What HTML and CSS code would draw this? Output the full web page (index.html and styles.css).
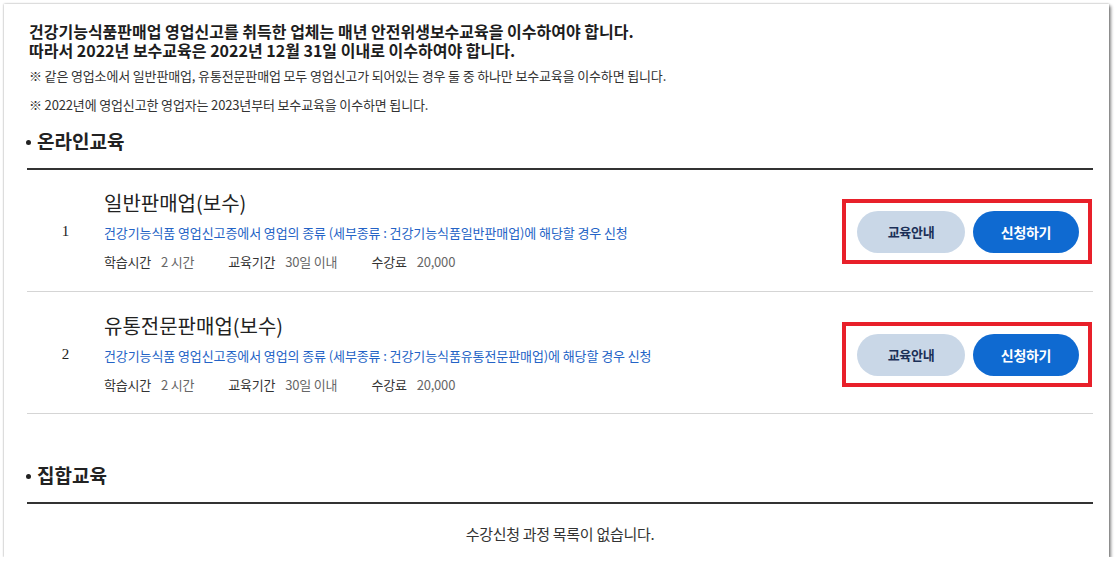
FILE: index.html
```html
<!DOCTYPE html>
<html>
<head>
    <title>보수교육 신청</title>
    <link rel="stylesheet" href="styles.css">
</head>
<body>
    <div class="panel">
        <div class="intro">
            <p class="intro-title">건강기능식품판매업 영업신고를 취득한 업체는 매년 안전위생보수교육을 이수하여야 합니다.</p>
            <p class="intro-title">따라서 2022년 보수교육은 2022년 12월 31일 이내로 이수하여야 합니다.</p>
            <p class="note">※ 같은 영업소에서 일반판매업, 유통전문판매업 모두 영업신고가 되어있는 경우 둘 중 하나만 보수교육을 이수하면 됩니다.</p>
            <p class="note note-second">※ 2022년에 영업신고한 영업자는 2023년부터 보수교육을 이수하면 됩니다.</p>
        </div>

        <h2 class="sec-title">온라인교육</h2>
        <ul class="course-list">
            <li class="course">
                <span class="course-no">1</span>
                <div class="course-info">
                    <h3 class="course-name">일반판매업(보수)</h3>
                    <p class="course-desc">건강기능식품 영업신고증에서 영업의 종류 (세부종류 : 건강기능식품일반판매업)에 해당할 경우 신청</p>
                    <div class="course-meta">
                        <span><em>학습시간</em>2 시간</span>
                        <span><em>교육기간</em>30일 이내</span>
                        <span><em>수강료</em>20,000</span>
                    </div>
                </div>
                <div class="course-btns">
                    <button class="btn btn-guide">교육안내</button>
                    <button class="btn btn-apply">신청하기</button>
                </div>
            </li>
            <li class="course">
                <span class="course-no">2</span>
                <div class="course-info">
                    <h3 class="course-name">유통전문판매업(보수)</h3>
                    <p class="course-desc">건강기능식품 영업신고증에서 영업의 종류 (세부종류 : 건강기능식품유통전문판매업)에 해당할 경우 신청</p>
                    <div class="course-meta">
                        <span><em>학습시간</em>2 시간</span>
                        <span><em>교육기간</em>30일 이내</span>
                        <span><em>수강료</em>20,000</span>
                    </div>
                </div>
                <div class="course-btns">
                    <button class="btn btn-guide">교육안내</button>
                    <button class="btn btn-apply">신청하기</button>
                </div>
            </li>
        </ul>

        <h2 class="sec-title sec-offline">집합교육</h2>
        <p class="empty">수강신청 과정 목록이 없습니다.</p>
    </div>
</body>
</html>
```

FILE: styles.css
```css
body {
    margin: 0;
    padding: 4px 0 0 4px;
    background-color: #fff;
    font-family: "Noto Sans CJK KR", "Noto Sans", sans-serif;
    color: #222;
}

.panel {
    box-sizing: border-box;
    width: 1105px;
    height: 553px;
    padding: 18px 16px 0 23px;
    background-color: #fff;
    box-shadow: 2px 2px 3px rgba(0, 0, 0, 0.45), 0 0 2px rgba(0, 0, 0, 0.35);
    overflow: hidden;
}

p, h2, h3, ul {
    margin: 0;
    padding: 0;
}

.intro {
    padding-left: 2px;
}

.intro-title {
    font-size: 16px;
    line-height: 19px;
    font-weight: bold;
    color: #1d1d1d;
}

.note {
    margin-top: 7px;
    font-size: 13px;
    line-height: 18px;
    letter-spacing: -0.15px;
    color: #333;
}

.note-second {
    margin-top: 11px;
}

.sec-title {
    display: flex;
    align-items: center;
    margin-top: 14px;
    padding-bottom: 14px;
    border-bottom: 2px solid #333;
    font-size: 19px;
    line-height: 26px;
    font-weight: bold;
}

.sec-title::before {
    content: "";
    width: 5px;
    height: 5px;
    border-radius: 50%;
    background-color: #222;
    margin: 3px 6px 0 -1px;
}

.course-list {
    list-style: none;
}

.course {
    display: flex;
    align-items: center;
    padding: 20px 1px 19px 0;
    border-bottom: 1px solid #d5d5d5;
}

.course + .course {
    padding-top: 21px;
    padding-bottom: 18px;
}

.course-no {
    width: 77px;
    text-align: center;
    font-family: "Liberation Serif", serif;
    font-size: 15px;
    color: #222;
}

.course-info {
    flex: 1;
}

.course-name {
    font-size: 20px;
    line-height: 26px;
    font-weight: normal;
    color: #222;
}

.course-desc {
    margin-top: 7px;
    font-size: 13px;
    line-height: 20px;
    letter-spacing: -0.1px;
    color: #2463c6;
}

.course-meta {
    display: flex;
    gap: 34px;
    margin-top: 9px;
    font-size: 13px;
    line-height: 20px;
    letter-spacing: -0.2px;
    color: #666;
}

.course-meta em {
    font-style: normal;
    color: #333;
    margin-right: 10px;
}

.course-btns {
    display: flex;
    gap: 8px;
    padding: 8px 9px 7px 11px;
    border: 4px solid #e8202a;
}

.btn {
    width: 108px;
    height: 42px;
    border: none;
    border-radius: 21px;
    font-family: "Noto Sans CJK KR", "Noto Sans", sans-serif;
    font-size: 13px;
    font-weight: bold;
    letter-spacing: -0.3px;
    cursor: pointer;
}

.btn-guide {
    background-color: #c9d7e7;
    color: #1b2f57;
}

.btn-apply {
    width: 106px;
    background-color: #0f6ad1;
    color: #fff;
    font-size: 14px;
}

.sec-offline {
    margin-top: 48px;
}

.empty {
    margin-top: 20px;
    text-align: center;
    font-size: 15px;
    line-height: 20px;
    letter-spacing: -0.3px;
    color: #333;
}
```
